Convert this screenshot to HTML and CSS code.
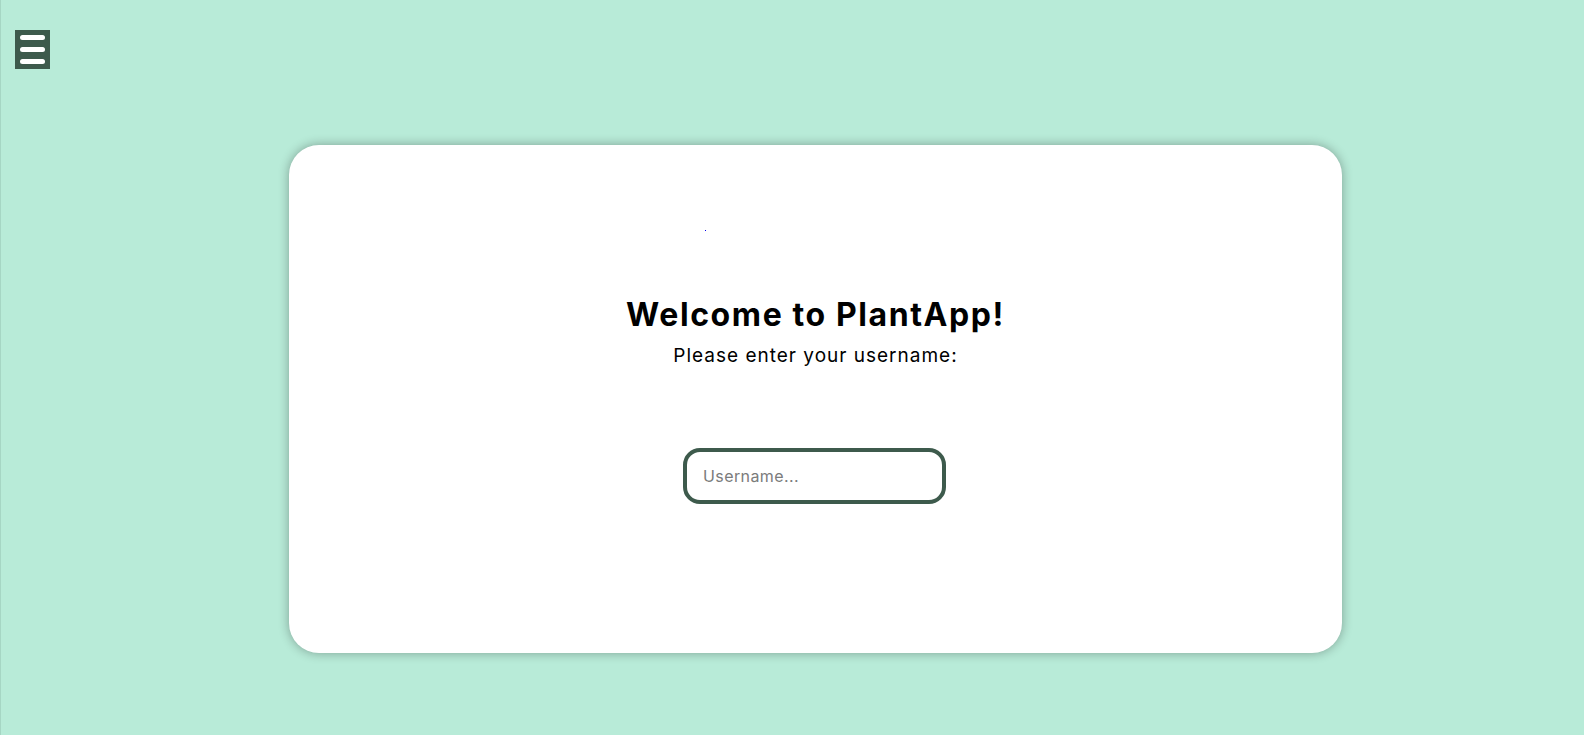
FILE: index.html
```html
<!DOCTYPE html>
<html lang="en">
<head>
<meta charset="utf-8">
<title>PlantApp</title>
<link rel="stylesheet" href="styles.css">
</head>
<body>
<div class="page">
  <aside class="side">
    <button class="menu-btn" aria-label="Menu">
      <span class="bar"></span>
      <span class="bar"></span>
      <span class="bar"></span>
    </button>
  </aside>
  <main class="main">
    <section class="card">
      <div class="logo-row"><span class="logo-dot"></span></div>
      <h1 class="title">Welcome to PlantApp!</h1>
      <p class="subtitle">Please enter your username:</p>
      <input class="username" type="text" placeholder="Username...">
    </section>
  </main>
</div>
</body>
</html>
```
FILE: styles.css
```css
html, body {
  margin: 0;
  padding: 0;
  height: 100%;
}
body {
  background: #b8ebd8;
  font-family: "Inter", "Open Sans", "DejaVu Sans", sans-serif;
  color: #000;
  border-left: 1px solid #a6d6c4;
  box-sizing: border-box;
}
.page {
  display: flex;
  min-height: 735px;
}
.side {
  width: 46px;
  flex: none;
  padding-top: 30px;
  padding-left: 14px;
  box-sizing: border-box;
}
.menu-btn {
  width: 35px;
  height: 39px;
  background: #3d5a4c;
  border: none;
  padding: 0;
  display: flex;
  flex-direction: column;
  align-items: center;
  justify-content: center;
  gap: 7px;
}
.bar {
  display: block;
  width: 25px;
  height: 5px;
  border-radius: 3px;
  background: #fff;
}
.main {
  flex: 1;
  display: flex;
  justify-content: center;
  align-items: flex-start;
  padding-top: 145px;
}
.card {
  width: 1053px;
  height: 508px;
  box-sizing: border-box;
  background: #fff;
  border-radius: 30px;
  box-shadow: 0 0 11px rgba(0, 0, 0, 0.32);
  display: flex;
  flex-direction: column;
  align-items: center;
  padding-top: 85px;
}
.logo-row {
  width: 100%;
  height: 1px;
  display: flex;
  padding-left: 416px;
  box-sizing: border-box;
}
.logo-dot {
  width: 1px;
  height: 1px;
  background: #0000ee;
}
.title {
  margin: 64px 0 0 0;
  font-size: 32px;
  line-height: 40px;
  font-weight: 700;
  letter-spacing: 1.6px;
}
.subtitle {
  margin: 9px 0 0 0;
  font-size: 19px;
  line-height: 24px;
  font-weight: 400;
  letter-spacing: 1px;
}
.username {
  margin-top: 80px;
  width: 263px;
  height: 56px;
  box-sizing: border-box;
  border: 4px solid #3d5a4c;
  border-radius: 17px;
  padding: 0 0 0 16px;
  font-family: inherit;
  font-size: 16px;
  letter-spacing: 0.4px;
  outline: none;
  transform: translateX(-1px);
}
.username::placeholder {
  color: #7b7b7b;
}
```
